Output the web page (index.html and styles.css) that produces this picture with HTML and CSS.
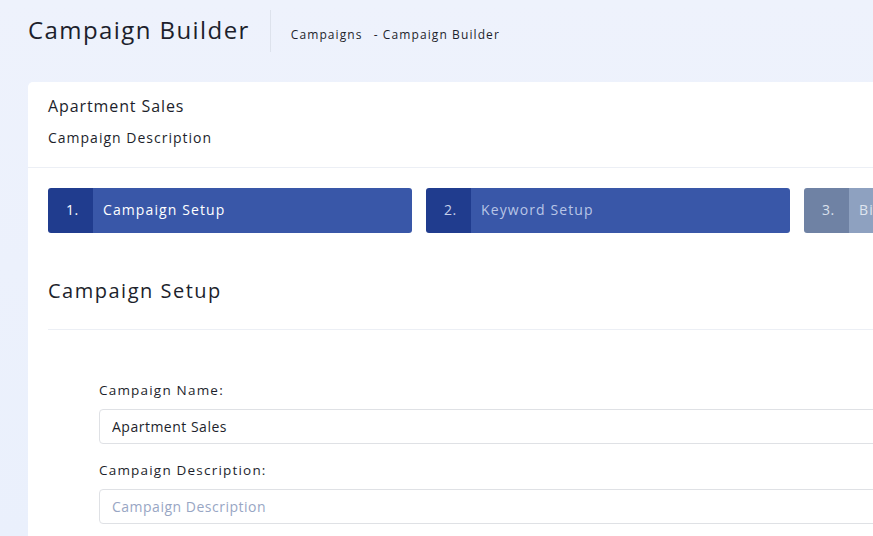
FILE: index.html
```
<!DOCTYPE html>
<html>
<head>
<meta charset="utf-8">
<link rel="stylesheet" href="styles.css">
</head>
<body>
<div class="page">
  <header class="topbar">
    <h1 class="title">Campaign Builder</h1>
    <div class="sep"></div>
    <nav class="crumbs"><span>Campaigns</span><span class="dash">- Campaign Builder</span></nav>
  </header>
  <section class="card">
    <div class="card-head">
      <div class="card-title">Apartment Sales</div>
      <div class="card-desc">Campaign Description</div>
    </div>
    <div class="card-body">
      <div class="steps">
        <div class="step active"><span class="num">1.</span><span class="label">Campaign Setup</span></div>
        <div class="step next"><span class="num">2.</span><span class="label">Keyword Setup</span></div>
        <div class="step off"><span class="num">3.</span><span class="label">Bidding Setup</span></div>
      </div>
      <h2 class="section-title">Campaign Setup</h2>
      <form class="form">
        <label class="field">
          <span class="field-label">Campaign Name:</span>
          <input class="input" type="text" value="Apartment Sales">
        </label>
        <label class="field">
          <span class="field-label">Campaign Description:</span>
          <input class="input" type="text" placeholder="Campaign Description">
        </label>
      </form>
    </div>
  </section>
</div>
</body>
</html>
```
FILE: styles.css
```
* { box-sizing: border-box; }
html, body { margin: 0; height: 100%; }
body {
  font-family: "Open Sans", "Liberation Sans", sans-serif;
  background: linear-gradient(180deg, #eef2fc 0%, #eaf0fc 100%);
  color: #1d1f2c;
  overflow: hidden;
}
.page { width: 873px; padding: 0 0 0 28px; overflow: hidden; }
.topbar { display: flex; align-items: center; height: 62px; }
.title { margin: 0 0 4px; font-size: 24px; font-weight: 400; color: #1d1f2c; letter-spacing: 1.42px; }
.sep { width: 1px; height: 42px; background: #dde2ec; margin: 0 20px 0 20px; }
.crumbs { font-size: 12px; color: #1d1f2c; padding-top: 6px; display: flex; gap: 11px; letter-spacing: 1.1px; }
.card {
  margin-top: 20px;
  background: #fff;
  border-radius: 5px 0 0 0;
  width: 845px;
  height: 480px;
}
.card-head { padding: 13px 20px 19px; border-bottom: 1px solid #eceff5; }
.card-title { font-size: 16px; line-height: 22px; letter-spacing: 0.9px; }
.card-desc { font-size: 14px; line-height: 20px; margin-top: 11px; letter-spacing: 1px; }
.card-body { padding: 20px 0 20px 20px; }
.steps { display: flex; gap: 14px; }
.step {
  width: 364px; height: 45px; border-radius: 3px; overflow: hidden;
  display: flex; align-items: stretch; font-size: 14px; flex: none;
}
.step .num { width: 45px; display: flex; align-items: center; padding: 0 0 2px 18px; letter-spacing: 0.5px; }
.step .label { flex: 1; display: flex; align-items: center; padding: 0 0 2px 10px; letter-spacing: 1.1px; white-space: nowrap; }
.step.active .num { background: #203c8e; color: #fff; }
.step.active .label { background: #3957a8; color: #fff; }
.step.next .num { background: #203c8e; color: #c6d0ea; }
.step.next .label { background: #3957a8; color: #b8c5e6; }
.step.off .num { background: #6f82a4; color: #d9e0ec; }
.step.off .label { background: #8ea1c0; color: #dfe5ef; }
.section-title {
  margin: 0; font-size: 20px; font-weight: 400; line-height: 28px; letter-spacing: 1.5px;
  padding: 44px 0 24px; border-bottom: 1px solid #eceff5;
}
.form { padding: 50px 0 0 51px; display: flex; flex-direction: column; gap: 16px; }
.field { display: flex; flex-direction: column; gap: 9px; }
.field-label { font-size: 13.5px; font-weight: 500; line-height: 20px; letter-spacing: 1.2px; }
.input {
  width: 900px; height: 35px; border: 1px solid #dfe1e5; border-radius: 4px;
  padding: 0 12px; font: inherit; font-size: 14px; color: #1d1f2c; outline: none; letter-spacing: 0.5px;
}
.input::placeholder { color: #98a6c4; }
```
